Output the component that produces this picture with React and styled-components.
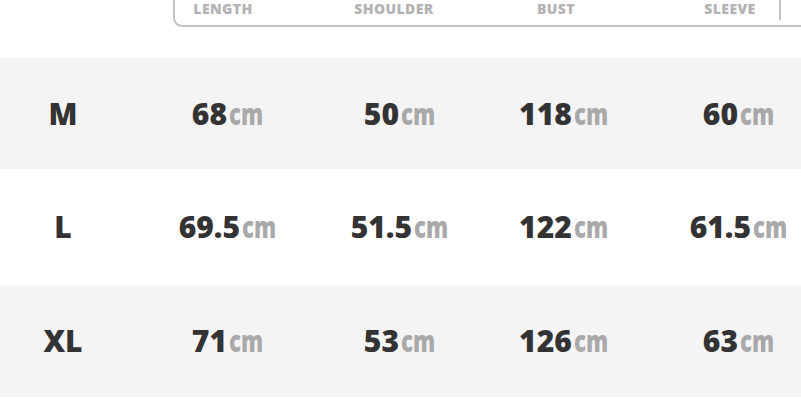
import React from 'react';
import styled, { createGlobalStyle } from 'styled-components';

const GlobalStyle = createGlobalStyle`
  html, body {
    margin: 0;
    padding: 0;
    background: #fff;
    overflow: hidden;
  }
  body {
    font-family: "Open Sans", "Noto Sans", sans-serif;
  }
`;

const Page = styled.div`
  width: 820px;
  height: 409px;
  display: flex;
  flex-direction: column;
`;

const Header = styled.div`
  margin-left: 173px;
  height: 25px;
  border-left: 2px solid #c2c2c2;
  border-bottom: 2px solid #c2c2c2;
  border-bottom-left-radius: 9px;
  display: grid;
  grid-template-columns: 96px 246px 78px 86px 98px 1fr;
  align-items: start;
  margin-bottom: 31px;
`;

const Label = styled.div`
  grid-column: ${(p) => p.$col};
  text-align: center;
  font-size: 14px;
  line-height: 16px;
  padding-top: 1px;
  font-weight: 800;
  letter-spacing: 0.4px;
  color: #b3b3b3;
`;

const Divider = styled.div`
  grid-column: 6;
  height: 20px;
  border-left: 2px solid #c4c4c4;
`;

const Row = styled.div`
  height: ${(p) => p.$h}px;
  background: ${(p) => (p.$shade ? '#f5f4f5' : '#fff')};
  display: grid;
  grid-template-columns: 126px 204px 140px 188px 162px;
  align-items: center;
`;

const Cell = styled.div`
  text-align: center;
  font-size: 30px;
  line-height: 30px;
  font-weight: 800;
  color: #333;
  white-space: nowrap;
`;

const Unit = styled.span`
  display: inline-block;
  color: #a9a9a9;
  margin-left: 2px;
  margin-right: -11px;
  transform: scaleX(0.74);
  transform-origin: left center;
`;

const labels = [
  { text: 'LENGTH', col: 1 },
  { text: 'SHOULDER', col: 2 },
  { text: 'BUST', col: 3 },
  { text: 'SLEEVE', col: 5 },
];

const rows = [
  { size: 'M', values: ['68', '50', '118', '60'], shade: true, h: 111 },
  { size: 'L', values: ['69.5', '51.5', '122', '61.5'], shade: false, h: 116 },
  { size: 'XL', values: ['71', '53', '126', '63'], shade: true, h: 112 },
];

export default function App() {
  return (
    <>
      <GlobalStyle />
      <Page>
        <Header>
          {labels.map((l) => (
            <Label key={l.text} $col={l.col}>
              {l.text}
            </Label>
          ))}
          <Divider />
        </Header>
        {rows.map((r) => (
          <Row key={r.size} $shade={r.shade} $h={r.h}>
            <Cell>{r.size}</Cell>
            {r.values.map((v, i) => (
              <Cell key={i}>
                {v}
                <Unit>cm</Unit>
              </Cell>
            ))}
          </Row>
        ))}
      </Page>
    </>
  );
}
